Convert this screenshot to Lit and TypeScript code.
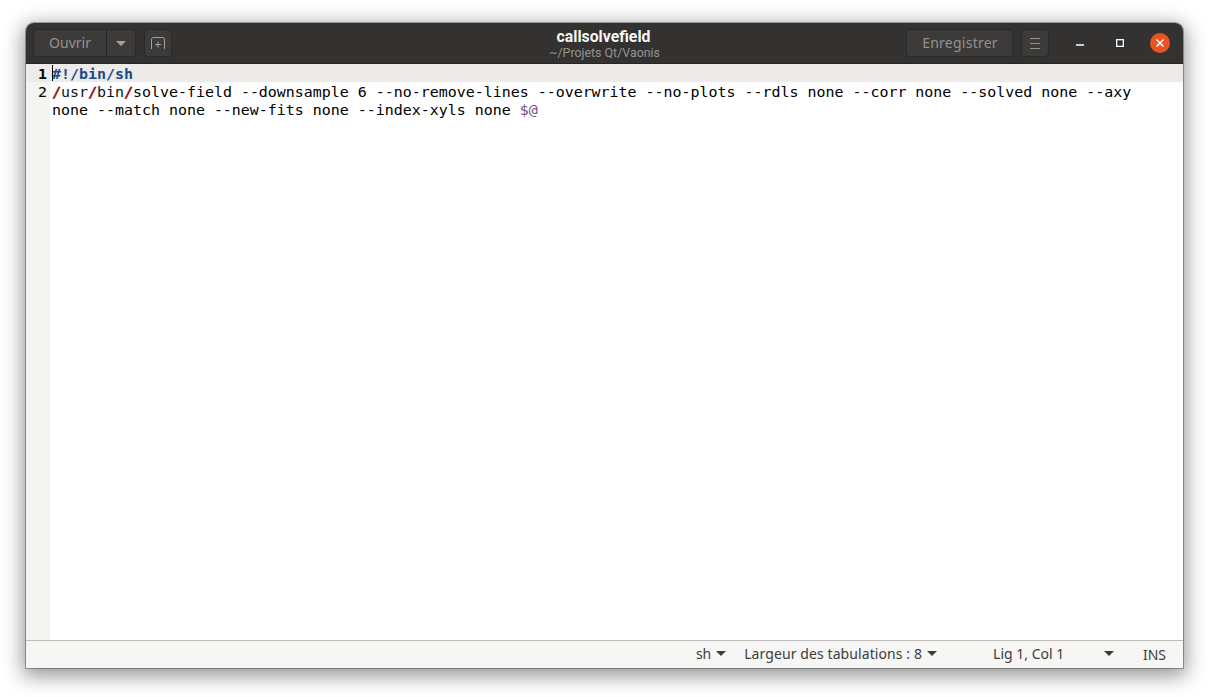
import { LitElement, html, css } from "lit";
import { customElement } from "lit/decorators.js";

@customElement("app-root")
export class AppRoot extends LitElement {
  static styles = css`
    :host { display: block; width: 1209px; height: 697px; padding: 23px 26px 29px; box-sizing: border-box; background: #fff; overflow: hidden; }
    .win { width: 1157px; height: 645px; display: flex; flex-direction: column; border-radius: 8px 8px 0 0; box-shadow: 0 0 0 1px rgba(0,0,0,.3), 0 5px 20px 3px rgba(0,0,0,.42); background: #fff; font-family: "Noto Sans", sans-serif; overflow: hidden; }
    .head { height: 41px; flex: none; background: #333231; border-bottom: 1px solid #262525; box-sizing: border-box; display: flex; align-items: center; padding: 0 13px 0 7px; position: relative; color: #fff; }
    .btn { height: 28px; box-sizing: border-box; background: #3c3b3a; border: 1px solid #2a2929; border-radius: 4px; color: #95928e; font-size: 14px; display: flex; align-items: center; justify-content: center; }
    .open { width: 74px; border-radius: 4px 0 0 4px; border-right: 1px solid #262525; padding-bottom: 2px; }
    .drop { width: 29px; border-radius: 0 4px 4px 0; border-left: 0; }
    .newtab { width: 28px; margin-left: 8px; }
    .title { position: absolute; left: 0; right: 0; top: 6px; text-align: center; line-height: 16px; pointer-events: none; font-family: Roboto, sans-serif; }
    .t1 { font-size: 15.8px; font-weight: 700; color: #f5f5f4; padding-right: 2px; }
    .t2 { font-size: 12.4px; color: #95928e; }
    .spacer { flex: 1; }
    .save { width: 107px; letter-spacing: .25px; padding: 0 0 2px 1px; }
    .menu { width: 28px; margin-left: 8px; }
    .wc { display: flex; align-items: center; margin-left: 11px; }
    .wcb { width: 40px; height: 24px; display: flex; align-items: center; justify-content: center; }
    .close { width: 20px; height: 20px; border-radius: 50%; background: #e95420; display: flex; align-items: center; justify-content: center; margin-left: 10px; }
    .body { flex: 1; min-height: 0; display: flex; background: #fff; position: relative; }
    .gutter { width: 24px; flex: none; background: #f4f4f3; font: 700 14.95px/20px "DejaVu Sans Mono", monospace; color: #000; }
    .num { height: 18px; text-align: right; padding-right: 3px; }
    .num.cur { background: #ecebe9; font-weight: 700; }
    .num.reg { font-weight: 400; }
    .code { flex: 1; font: 400 14.95px/20px "DejaVu Sans Mono", monospace; color: #000; padding: 0; min-width: 0; }
    .line { padding-left: 2px; white-space: pre; height: 18px; position: relative; }
    .line.cur { background: #ecebe9; }
    .caret { position: absolute; left: 2px; top: 1px; width: 1px; height: 16px; background: #000; }
    .sb { font-weight: 700; color: #204a87; }
    .sl { font-weight: 700; color: #a80a0a; -webkit-text-stroke: .4px #7a0a14; }
    .ub { color: #0c1420; }
    .var { color: #75507b; }
    .status { height: 28px; flex: none; background: #f6f6f5; border-top: 1px solid #bebdbb; box-sizing: border-box; display: flex; align-items: center; font-size: 14px; color: #3d3c3b; padding-bottom: 2px; }
    .status span.i { display: flex; align-items: center; letter-spacing: -.1px; }
    .arrow { width: 0; height: 0; border-left: 5px solid transparent; border-right: 5px solid transparent; border-top: 5px solid #3d3c3b; margin-left: 5px; }
    .s-sh { margin-left: 670px; }
    .status span.s-tab { margin-left: 18px; letter-spacing: .09px; }
    .status span.s-pos { margin-left: 56px; width: 121px; justify-content: space-between; letter-spacing: 0; }
    .status span.s-ins { margin-left: 29px; position: relative; top: 1px; }
  `;

  render() {
    return html`<div class="win">
      <div class="head">
        <div class="btn open">Ouvrir</div>
        <div class="btn drop"><svg width="10" height="5" viewBox="0 0 10 5"><path d="M0 0h10L5 5z" fill="#a5a29e"/></svg></div>
        <div class="btn newtab"><svg width="16" height="16" viewBox="0 0 16 16" fill="none" stroke="#a5a29e"><path d="M1.5 14V4.5a2 2 0 0 1 2-2h9a2 2 0 0 1 2 2V14M8 6.5v6M5 9.5h6"/></svg></div>
        <div class="title"><div class="t1">callsolvefield</div><div class="t2">~/Projets Qt/Vaonis</div></div>
        <div class="spacer"></div>
        <div class="btn save">Enregistrer</div>
        <div class="btn menu"><svg width="12" height="11" viewBox="0 0 12 11" stroke="#95928e"><path d="M1 .5h10M1 5.5h10M1 10.5h10"/></svg></div>
        <div class="wc">
          <div class="wcb"><svg width="10" height="10" viewBox="0 0 10 10"><path d="M1 7h8" stroke="#fff" stroke-width="1.5"/></svg></div>
          <div class="wcb"><svg width="10" height="10" viewBox="0 0 10 10"><rect x="1.65" y="1.65" width="6.7" height="6.7" fill="none" stroke="#fff" stroke-width="1.3"/></svg></div>
          <div class="close"><svg width="10" height="10" viewBox="0 0 10 10"><path d="M1.5 1.5l7 7M8.5 1.5l-7 7" stroke="#fff" stroke-width="1.5"/></svg></div>
        </div>
      </div>
      <div class="body">
        <div class="gutter">
          <div class="num cur">1</div>
          <div class="num reg">2</div>
        </div>
        <div class="code">
          <div class="line cur"><span class="caret"></span><span class="sb">#!/bin/sh</span></div>
          <div class="line"><span class="sl">/</span><span class="ub">usr</span><span class="sl">/</span><span class="ub">bin</span><span class="sl">/</span>solve-field --downsample 6 --no-remove-lines --overwrite --no-plots --rdls none --corr none --solved none --axy</div>
          <div class="line">none --match none --new-fits none --index-xyls none <span class="var">$@</span></div>
        </div>
      </div>
      <div class="status">
        <span class="i s-sh">sh<span class="arrow"></span></span>
        <span class="i s-tab">Largeur des tabulations : 8<span class="arrow"></span></span>
        <span class="i s-pos">Lig 1, Col 1<span class="arrow"></span></span>
        <span class="i s-ins">INS</span>
      </div>
    </div>`;
  }
}
